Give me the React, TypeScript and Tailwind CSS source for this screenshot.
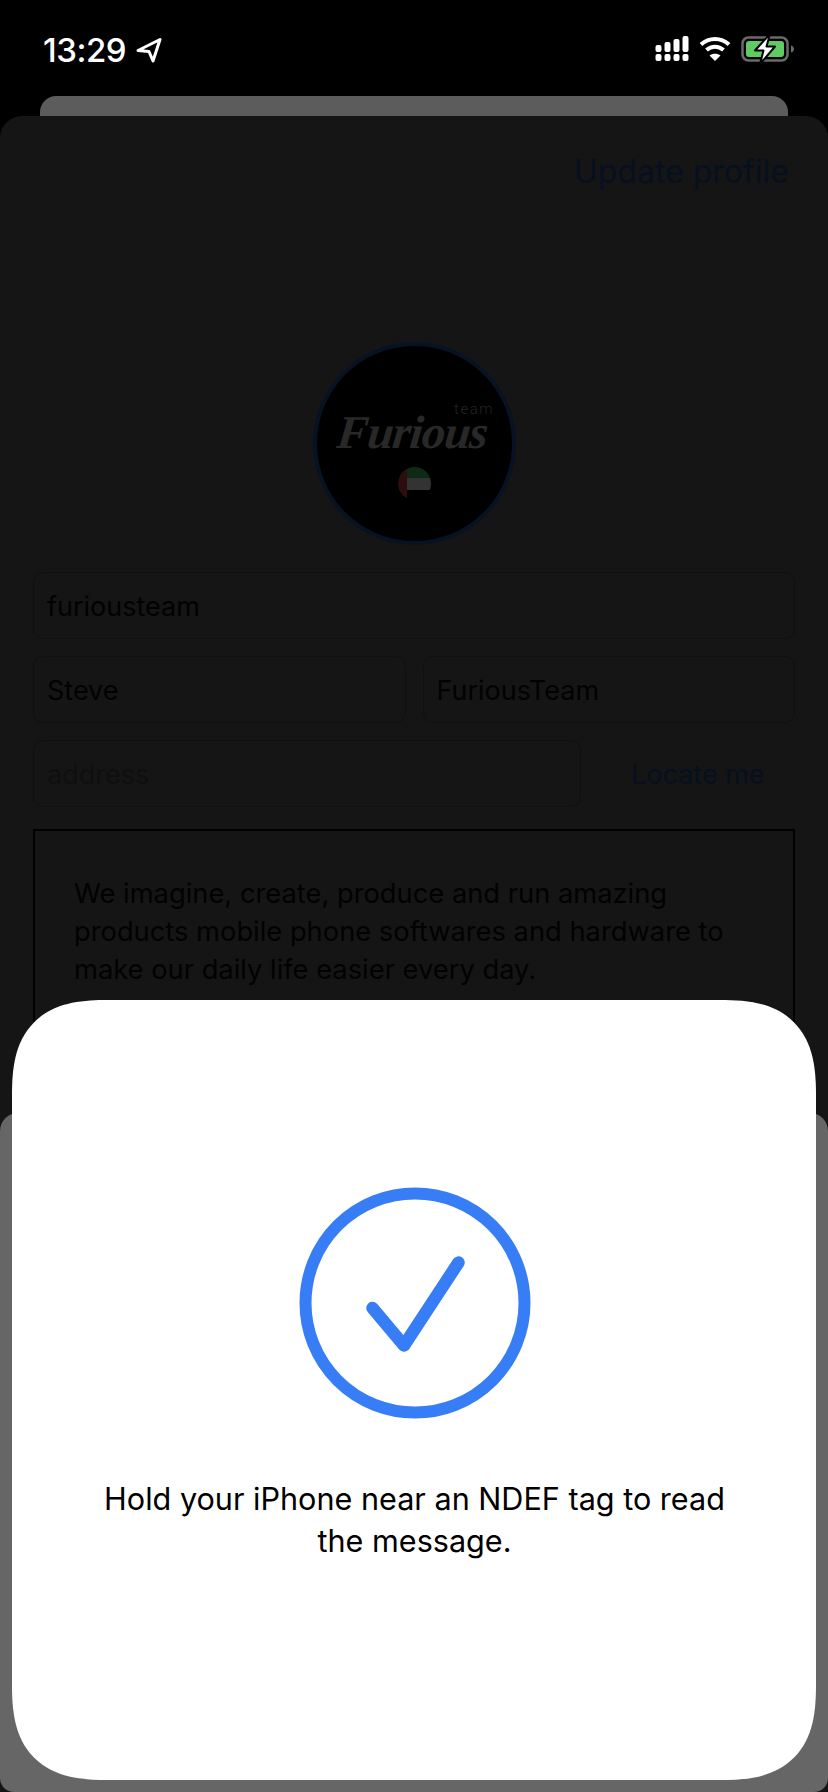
import React from "react";

const sans = "font-['Inter','Liberation_Sans',sans-serif]";

const Field: React.FC<{ value: string; muted?: boolean; className?: string }> = ({ value, muted, className }) => (
  <div
    className={`flex h-[67px] items-center rounded-[10px] border border-[#101010] pl-[13px] pt-[3px] text-[27px] ${
      muted ? "text-[#0f0f0f]" : "text-[#020202]"
    } ${className ?? ""}`}
  >
    {value}
  </div>
);

const StatusBar: React.FC = () => (
  <div className="flex h-[96px] items-start justify-between pl-[43px] pr-[33px] pt-[30px]">
    <div className="flex items-center gap-[10px] text-white">
      <span className="text-[33px] leading-[40px] font-medium tracking-[-0.5px]">13:29</span>
      <svg width="26" height="26" viewBox="0 0 26 26" fill="none">
        <path d="M2 13.5 24 2.5 17 24 13 14.5Z" stroke="#fff" strokeWidth="3" strokeLinejoin="round" />
      </svg>
    </div>
    <div className="flex items-center gap-[10px] pt-[4px]">
      <svg width="34" height="26" viewBox="0 0 33 26" fill="#fff">
        <rect x="0" y="9" width="6" height="7" rx="2" />
        <rect x="9" y="6" width="6" height="10" rx="2" />
        <rect x="18" y="3" width="6" height="13" rx="2" />
        <rect x="27" y="0" width="6" height="16" rx="2" />
        <rect x="0" y="18" width="6" height="7" rx="2" />
        <rect x="9" y="18" width="6" height="7" rx="2" />
        <rect x="18" y="18" width="6" height="7" rx="2" />
        <rect x="27" y="18" width="6" height="7" rx="2" />
      </svg>
      <svg width="32" height="26" viewBox="0 0 32 26" fill="none" stroke="#fff" strokeWidth="4">
        <path d="M2 8.5C10 1 22 1 30 8.5" />
        <path d="M7.5 14C12.5 9.5 19.5 9.5 24.5 14" />
        <path d="M16 25 10.5 19.5C13.5 17 18.5 17 21.5 19.5Z" fill="#fff" stroke="none" />
      </svg>
      <svg width="54" height="30" viewBox="0 0 54 30" fill="none">
        <rect x="1.5" y="3.5" width="45" height="23" rx="6" stroke="#6a6a6a" strokeWidth="2.5" />
        <rect x="5" y="7" width="38" height="16" rx="3" fill="#5ecb63" />
        <path d="M50 11.5C52 12 53 13.5 53 15 53 16.5 52 18 50 18.5Z" fill="#6a6a6a" />
        <path d="M29 0 14 16.5H22.5L19 30 34 12.5H25.5Z" fill="#fff" stroke="#000" strokeWidth="2" strokeLinejoin="round" />
      </svg>
    </div>
  </div>
);

const Avatar: React.FC = () => (
  <div className="relative flex h-[203px] w-[203px] flex-col items-center rounded-full border-[4px] border-[#071322] bg-black">
    <div className="relative mt-[62px] h-[52px] w-[160px]">
      <span className="absolute right-[0px] top-[-8px] font-['Roboto',sans-serif] text-[15px] leading-[18px] font-light tracking-[1.5px] text-[#242424]">
        team
      </span>
      <span className="absolute left-[1px] top-[0px] origin-bottom-left -skew-x-6 whitespace-nowrap font-['Liberation_Serif',serif] text-[47px] leading-[48px] font-bold italic tracking-[-1px] text-[#282828]">
        Furious
      </span>
    </div>
    <div className="mt-[7px] flex h-[33px] w-[33px] overflow-hidden rounded-full">
      <div className="w-[9px] bg-[#2e0d0d]" />
      <div className="flex flex-1 flex-col">
        <div className="h-[11px] bg-[#0f2a14]" />
        <div className="h-[12px] bg-[#333333]" />
        <div className="h-[10px] bg-black" />
      </div>
    </div>
  </div>
);

const Sheet: React.FC = () => (
  <div className="flex flex-col px-[33px] pt-[36px]">
    <div className="flex justify-end pr-[6px] text-[32px] leading-[40px] text-[#06101f]">Update profile</div>
    <div className="mt-[150px] flex justify-center">
      <Avatar />
    </div>
    <div className="mt-[27px] flex flex-col gap-[17px]">
      <Field value="furiousteam" />
      <div className="flex gap-[17px]">
        <Field value="Steve" className="flex-1" />
        <Field value="FuriousTeam" className="flex-1" />
      </div>
      <div className="flex items-center">
        <Field value="address" muted className="w-[548px]" />
        <span className="ml-[50px] pt-[3px] text-[27px] text-[#06101f]">Locate me</span>
      </div>
    </div>
    <div className="mt-[22px] h-[400px] border-2 border-black pl-[39px] pr-[38px] pt-[44px] text-[27.3px] leading-[38px] text-[#020202]">
      We imagine, create, produce and run amazing products mobile phone softwares and hardware to make our daily life easier every day.
    </div>
  </div>
);

const NfcModal: React.FC = () => (
  <div className="absolute left-[12px] top-[1000px] flex h-[780px] w-[804px] flex-col items-center rounded-[96px] bg-white pl-[1px] pt-[187px] [corner-shape:superellipse(1.4)]">
    <svg width="232" height="232" viewBox="0 0 232 232" fill="none" stroke="#377df6" strokeLinecap="round" strokeLinejoin="round">
      <circle cx="116" cy="116" r="109.5" strokeWidth="12" />
      <path d="M73.5 121 105 158.5 159.5 75.5" strokeWidth="12.5" />
    </svg>
    <p className="mt-[59px] w-[670px] text-center text-[30.6px] leading-[42px] text-black">
      Hold your iPhone near an NDEF tag to read the message.
    </p>
  </div>
);

export default function App() {
  return (
    <div className={`relative h-[1792px] w-[828px] overflow-hidden bg-black ${sans}`}>
      <StatusBar />
      <div className="absolute left-[40px] top-[96px] h-[40px] w-[748px] rounded-t-[16px] bg-[#5c5c5c]" />
      <div className="absolute inset-x-0 top-[116px] bottom-0 rounded-t-[22px] bg-[#151515]">
        <Sheet />
      </div>
      <div className="absolute inset-x-0 bottom-0 top-[1113px] rounded-t-[18px] rounded-b-[14px] bg-[#666666]" />
      <NfcModal />
    </div>
  );
}
